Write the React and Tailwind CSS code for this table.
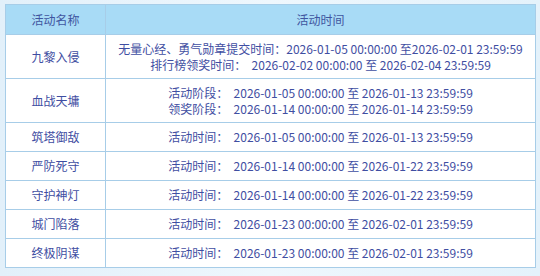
const rows = [
  {
    name: '九黎入侵',
    lines: [
      '无量心经、勇气勋章提交时间：2026-01-05 00:00:00 至2026-02-01 23:59:59',
      '排行榜领奖时间：  2026-02-02 00:00:00 至 2026-02-04 23:59:59',
    ],
  },
  {
    name: '血战天墉',
    lines: [
      '活动阶段：  2026-01-05 00:00:00 至 2026-01-13 23:59:59',
      '领奖阶段：  2026-01-14 00:00:00 至 2026-01-14 23:59:59',
    ],
  },
  { name: '筑塔御敌', lines: ['活动时间：  2026-01-05 00:00:00 至 2026-01-13 23:59:59'] },
  { name: '严防死守', lines: ['活动时间：  2026-01-14 00:00:00 至 2026-01-22 23:59:59'] },
  { name: '守护神灯', lines: ['活动时间：  2026-01-14 00:00:00 至 2026-01-22 23:59:59'] },
  { name: '城门陷落', lines: ['活动时间：  2026-01-23 00:00:00 至 2026-02-01 23:59:59'] },
  { name: '终极阴谋', lines: ['活动时间：  2026-01-23 00:00:00 至 2026-02-01 23:59:59'] },
]

export default function App() {
  return (
    <div
      className="w-[540px] h-[276px] bg-gradient-to-r from-[#e2f0fa] via-[#eef7fd] to-[#e4f2fb] pt-[4px] pl-[5px]"
      style={{ fontFamily: '"Noto Sans CJK SC", "Noto Sans", sans-serif' }}
    >
      <table className="w-[531px] border-collapse border border-[#a7cde8] text-[12px] leading-[16px] text-[#3f4ea2] table-fixed">
        <colgroup>
          <col className="w-[100px]" />
          <col />
        </colgroup>
        <thead>
          <tr className="h-[30px] bg-[#a8dbf6]">
            <th className="border border-[#a7cde8] font-normal text-[#3f55a0]">活动名称</th>
            <th className="border border-[#a7cde8] font-normal text-[#3f55a0]">活动时间</th>
          </tr>
        </thead>
        <tbody>
          {rows.map((r) => (
            <tr key={r.name} className={r.lines.length > 1 ? 'h-[44px] bg-white' : 'h-[29px] bg-white'}>
              <td className="border border-[#a7cde8] text-center">{r.name}</td>
              <td className="border border-[#a7cde8] text-center">
                {r.lines.map((l) => (
                  <div key={l} className="whitespace-pre">{l}</div>
                ))}
              </td>
            </tr>
          ))}
        </tbody>
      </table>
    </div>
  )
}
